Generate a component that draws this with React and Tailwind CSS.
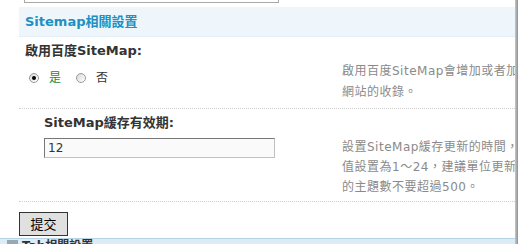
import { useState } from 'react';

const font = { fontFamily: '"DejaVu Sans", "Noto Sans CJK TC", sans-serif' };

const Radio = ({ checked }) => (
    <span className="inline-flex w-[10px] h-[10px] rounded-full border border-[#9a9a9a] bg-gradient-to-br from-[#d8d8d8] to-white items-center justify-center">
        {checked && <span className="w-[4px] h-[4px] rounded-full bg-black" />}
    </span>
);

export default function App() {
    const [enabled, setEnabled] = useState(true);
    const [ttl, setTtl] = useState('12');

    return (
        <div className="w-[518px] h-[244px] overflow-hidden bg-white flex text-[12px] text-[#333]" style={font}>
            <div className="flex-1 flex flex-col min-w-0">
                {/* previous input edge */}
                <div className="ml-[24px] w-[255px] h-[3px] border-x border-b border-[#a8a8a8]" />

                {/* section header */}
                <div className="ml-[19px] mt-[4px] h-[30px] bg-[#eef6fc] border-b border-dotted border-[#dde8f0] pl-[6px] flex items-center">
                    <span className="font-bold text-[13px] text-[#2090c0]">Sitemap相關設置</span>
                </div>

                {/* baidu sitemap */}
                <div className="ml-[19px] pl-[6px] pt-[5px] font-bold text-[13px] text-[#333] leading-[17px]">啟用百度SiteMap:</div>
                <div className="ml-[19px] flex border-b border-dotted border-[#cfcfcf] h-[51px]">
                    <div className="w-[323px] shrink-0 pl-[10px] pt-[12px] flex items-start gap-[8px] leading-[14px]">
                        <label className="flex items-center gap-[10px]" onClick={() => setEnabled(true)}>
                            <Radio checked={enabled} />
                            <span className="text-[#2a8a2a]">是</span>
                        </label>
                        <label className="flex items-center gap-[10px] ml-[7px]" onClick={() => setEnabled(false)}>
                            <Radio checked={!enabled} />
                            <span className="text-[#333]">否</span>
                        </label>
                    </div>
                    <div className="flex-1 min-w-0 text-[12px] tracking-[0.5px] text-[#8a8a8a] leading-[21px] pt-[2px] whitespace-nowrap overflow-hidden">
                        <div>啟用百度SiteMap會增加或者加快</div>
                        <div>網站的收錄。</div>
                    </div>
                </div>

                {/* sitemap cache */}
                <div className="ml-[19px] flex border-b border-dotted border-[#cfcfcf] h-[94px]">
                    <div className="w-[323px] shrink-0 pl-[25px]">
                        <div className="pt-[5px] font-bold text-[13px] leading-[17px]">SiteMap緩存有效期:</div>
                        <input
                            value={ttl}
                            onChange={(e) => setTtl(e.target.value)}
                            className="mt-[7px] w-[231px] h-[20px] border border-[#777] border-b-[#c0c0c0] border-r-[#c0c0c0] bg-[#fafafa] px-[3px] text-[12px] text-[#333] outline-none"
                            style={font}
                        />
                    </div>
                    <div className="flex-1 min-w-0 text-[12px] tracking-[0.5px] text-[#8a8a8a] leading-[20px] pt-[28px] whitespace-nowrap overflow-hidden">
                        <div>設置SiteMap緩存更新的時間，單</div>
                        <div>值設置為1～24，建議單位更新時</div>
                        <div>的主題數不要超過500。</div>
                    </div>
                </div>

                {/* submit */}
                <div className="ml-[19px] pt-[10px] pb-[2px]">
                    <button className="w-[49px] h-[24px] bg-[#e0e0e0] border border-[#333] text-[13px] text-black leading-none">提交</button>
                </div>

                {/* next section (cut off) */}
                <div className="h-[6px] bg-[#dcecf6] border-t border-[#b6d3e4] overflow-hidden flex items-start pl-[7px] gap-[4px]">
                    <span className="mt-[1px] w-[11px] h-[8px] bg-[#9aa8b0]" />
                    <span className="text-[12px] font-bold text-[#333] leading-[12px] mt-[1px]">Tab相關設置</span>
                </div>
            </div>

            {/* scrollbar edge */}
            <div className="w-[3px] bg-gradient-to-r from-[#c8c8c8] to-[#909090]" />
        </div>
    );
}
